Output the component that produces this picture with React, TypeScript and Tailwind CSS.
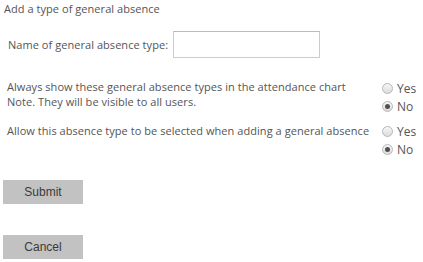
export default function App() {
    return (
        <div className="w-[423px] h-[262px] bg-white text-[#555] text-[11px] leading-[15px] tracking-[0.05px] font-['Open_Sans',sans-serif] overflow-hidden">
            <div className="pl-[4px] pt-[1px]">Add a type of general absence</div>

            {/* Name */}
            <div className="flex items-center mt-[15px] pl-[8px]">
                <span>Name of general absence type:</span>
                <input
                    type="text"
                    className="ml-[5px] w-[147px] h-[27px] border border-[#ccc] border-t-[#bbb] bg-white outline-none"
                />
            </div>

            {/* Attendance chart */}
            <div className="flex mt-[21px] pl-[7px]">
                <div className="w-[375px]">
                    <div>Always show these general absence types in the attendance chart</div>
                    <div>Note. They will be visible to all users.</div>
                </div>
                <RadioGroup value="no" />
            </div>

            {/* Selectable */}
            <div className="flex mt-[7px] pl-[7px]">
                <div className="w-[375px] pt-[1px]">Allow this absence type to be selected when adding a general absence</div>
                <RadioGroup value="no" />
            </div>

            <div className="pl-[3px] mt-[22px] flex flex-col gap-[31px]">
                <button className="w-[80px] h-[24px] bg-[#c2c2c2] text-[#3a3a3a] text-[12px] tracking-normal font-['Liberation_Sans',sans-serif]">Submit</button>
                <button className="w-[80px] h-[24px] bg-[#c2c2c2] text-[#3a3a3a] text-[12px] tracking-normal font-['Liberation_Sans',sans-serif]">Cancel</button>
            </div>
        </div>
    );
}

function RadioGroup({ value }: { value: string }) {
    return (
        <div className="flex flex-col">
            <Radio label="Yes" checked={value === 'yes'} />
            <Radio label="No" checked={value === 'no'} />
        </div>
    );
}

function Radio({ label, checked }: { label: string; checked: boolean }) {
    return (
        <label className="flex items-center h-[18px]">
            <span className="w-[11px] h-[11px] rounded-full border border-[#b8b8b8] bg-gradient-to-b from-[#f6f6f6] to-[#dcdcdc] flex items-center justify-center">
                {checked && <span className="w-[5px] h-[5px] rounded-full bg-[#505050]" />}
            </span>
            <span className="ml-[4px] text-[12px]">{label}</span>
        </label>
    );
}
